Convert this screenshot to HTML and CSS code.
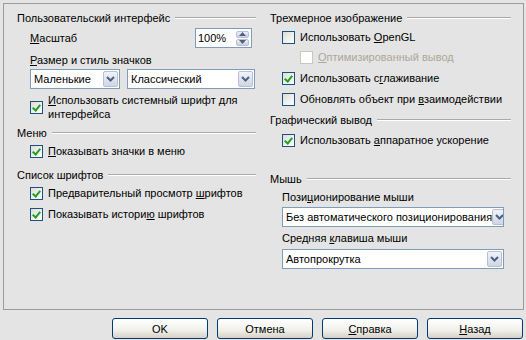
FILE: index.html
```html
<!DOCTYPE html>
<html lang="ru">
<head>
  <meta charset="UTF-8" />
  <title>Параметры - Вид</title>
  <link rel="stylesheet" href="styles.css">
</head>
<body>
  <div class="panel">
    <div class="column">
      <div class="heading">Пользовательский интерфейс</div>

      <div class="scale-row">
        <span><u>М</u>асштаб</span>
        <div class="spin">
          <span class="spin-value">100%</span>
          <span class="spin-buttons">
            <span class="spin-btn"><svg width="7" height="4" viewBox="0 0 7 4"><path d="M0 4 L3.5 0 L7 4 Z" fill="#4d6185"/></svg></span>
            <span class="spin-btn"><svg width="7" height="4" viewBox="0 0 7 4"><path d="M0 0 L3.5 4 L7 0 Z" fill="#4d6185"/></svg></span>
          </span>
        </div>
      </div>

      <div class="label indent-l mt5"><u>Р</u>азмер и стиль значков</div>
      <div class="select-pair">
        <div class="select small">
          <span>Маленькие</span>
          <span class="arrow"><svg width="9" height="6" viewBox="0 0 9 6"><path d="M1 1 L4.5 4.5 L8 1" fill="none" stroke="#4d6185" stroke-width="2"/></svg></span>
        </div>
        <div class="select style">
          <span>Классический</span>
          <span class="arrow"><svg width="9" height="6" viewBox="0 0 9 6"><path d="M1 1 L4.5 4.5 L8 1" fill="none" stroke="#4d6185" stroke-width="2"/></svg></span>
        </div>
      </div>

      <div class="check indent-l multi mt4">
        <span class="box on"></span>
        <span><u>И</u>спользовать системный шрифт для<br>интерфейса</span>
      </div>

      <div class="heading mt5">Меню</div>
      <div class="check indent-l mt4">
        <span class="box on"></span>
        <span><u>П</u>оказывать значки в меню</span>
      </div>

      <div class="heading mt10">Список шрифтов</div>
      <div class="check indent-l mt4">
        <span class="box on"></span>
        <span>Предварительный просмотр <u>ш</u>рифтов</span>
      </div>
      <div class="check indent-l mt7">
        <span class="box on"></span>
        <span>Показывать истори<u>ю</u> шрифтов</span>
      </div>
    </div>

    <div class="column">
      <div class="heading">Трехмерное изображение</div>
      <div class="check indent-r mt5">
        <span class="box"></span>
        <span>Использовать <u>O</u>penGL</span>
      </div>
      <div class="check indent-r2 disabled mt6">
        <span class="box"></span>
        <span><u>О</u>птимизированный вывод</span>
      </div>
      <div class="check indent-r mt7">
        <span class="box on"></span>
        <span>Использовать с<u>г</u>лаживание</span>
      </div>
      <div class="check indent-r mt7">
        <span class="box"></span>
        <span>Обновлять объект при <u>в</u>заимодействии</span>
      </div>

      <div class="heading mt7">Графический вывод</div>
      <div class="check indent-r mt6">
        <span class="box on"></span>
        <span>Использовать <u>а</u>ппаратное ускорение</span>
      </div>

      <div class="heading mt25">Мышь</div>
      <div class="label indent-r mt4">Пози<u>ц</u>ионирование мыши</div>
      <div class="select wide indent-r mt3">
        <span>Без автоматического позиционирования</span>
        <span class="arrow"><svg width="9" height="6" viewBox="0 0 9 6"><path d="M1 1 L4.5 4.5 L8 1" fill="none" stroke="#4d6185" stroke-width="2"/></svg></span>
      </div>
      <div class="label indent-r mt4">Средняя <u>к</u>лавиша мыши</div>
      <div class="select wide indent-r mt4">
        <span>Автопрокрутка</span>
        <span class="arrow"><svg width="9" height="6" viewBox="0 0 9 6"><path d="M1 1 L4.5 4.5 L8 1" fill="none" stroke="#4d6185" stroke-width="2"/></svg></span>
      </div>
    </div>
  </div>

  <div class="buttons">
    <button class="btn">OK</button>
    <button class="btn">Отмена</button>
    <button class="btn"><u>С</u>правка</button>
    <button class="btn"><u>Н</u>азад</button>
  </div>
</body>
</html>
```

FILE: styles.css
```css
body {
  margin: 0;
  width: 526px;
  height: 340px;
  overflow: hidden;
  background: #e4e4e4;
  font-family: "Liberation Sans", Arial, sans-serif;
  font-size: 11px;
  color: #000;
}
u {
  text-decoration: underline;
  text-underline-offset: 1px;
}
.panel {
  margin: 3px 0 0 3px;
  width: 521px;
  height: 307px;
  box-sizing: border-box;
  border: 1px solid #9c9c9c;
  padding: 7px 0 0 13px;
  display: grid;
  grid-template-columns: 239px 241px;
  column-gap: 14px;
  align-items: start;
}
.column {
  display: flex;
  flex-direction: column;
}
.heading {
  display: flex;
  align-items: center;
  height: 14px;
  line-height: 14px;
  white-space: nowrap;
}
.heading::after {
  content: "";
  flex: 1;
  margin-left: 5px;
  border-top: 1px solid #a9a9a9;
  border-bottom: 1px solid #fff;
}
.label {
  height: 14px;
  line-height: 14px;
}
.indent-l { margin-left: 13px; }
.indent-r { margin-left: 12px; }
.indent-r2 { margin-left: 30px; }
.mt3 { margin-top: 3px; }
.mt4 { margin-top: 4px; }
.mt5 { margin-top: 5px; }
.mt6 { margin-top: 6px; }
.mt7 { margin-top: 7px; }
.mt10 { margin-top: 10px; }
.mt25 { margin-top: 25px; }

.scale-row {
  display: flex;
  align-items: center;
  justify-content: space-between;
  height: 20px;
  margin: 3px 4px 0 13px;
}
.spin {
  width: 57px;
  height: 20px;
  box-sizing: border-box;
  border: 1px solid #7f9db9;
  background: #fff;
  display: flex;
  align-items: center;
  padding: 0 2px 0 2px;
}
.spin-value {
  flex: 1;
}
.spin-buttons {
  display: flex;
  flex-direction: column;
  gap: 1px;
}
.spin-btn {
  width: 13px;
  height: 7px;
  display: flex;
  align-items: center;
  justify-content: center;
  background: linear-gradient(#eef0f6, #c9cfdf);
  border: 1px solid #b7c0d6;
  box-sizing: border-box;
  border-radius: 2px;
}

.select-pair {
  display: flex;
  gap: 7px;
  margin: 2px 0 0 13px;
}
.select {
  height: 20px;
  box-sizing: border-box;
  border: 1px solid #7f9db9;
  background: #fff;
  display: flex;
  align-items: center;
  padding-left: 3px;
  white-space: nowrap;
  overflow: hidden;
}
.select.small { width: 90px; }
.select.style { width: 128px; }
.select.wide { width: 222px; }
.arrow {
  margin-left: auto;
  flex: none;
  width: 15px;
  height: 16px;
  margin-right: 1px;
  box-sizing: border-box;
  border: 1px solid #b7c0d6;
  border-radius: 2px;
  background: linear-gradient(#f1f3f8, #cfd5e4);
  display: flex;
  align-items: center;
  justify-content: center;
}

.check {
  display: flex;
  align-items: center;
  gap: 5px;
  min-height: 14px;
  line-height: 14px;
  white-space: nowrap;
}
.box {
  flex: none;
  width: 13px;
  height: 13px;
  box-sizing: border-box;
  border: 1px solid #1c5180;
  background: linear-gradient(135deg, #dcdcd7, #fff);
  position: relative;
}
.box.on::after {
  content: "";
  position: absolute;
  left: 3px;
  top: 1px;
  width: 3px;
  height: 6px;
  border: solid #21a121;
  border-width: 0 2px 2px 0;
  transform: rotate(40deg);
}
.disabled {
  color: #aca899;
}
.disabled .box {
  border-color: #cac8bb;
  background: #fff;
}

.buttons {
  display: flex;
  justify-content: flex-end;
  gap: 9px;
  margin: 8px 3px 0 0;
}
.btn {
  width: 96px;
  height: 21px;
  margin: 0;
  padding: 0;
  border: 1px solid #003c74;
  border-radius: 3px;
  background: linear-gradient(#ffffff, #f0f0ea 60%, #d6d0c5);
  font-family: "Liberation Sans", Arial, sans-serif;
  font-size: 11px;
  color: #000;
}
```
